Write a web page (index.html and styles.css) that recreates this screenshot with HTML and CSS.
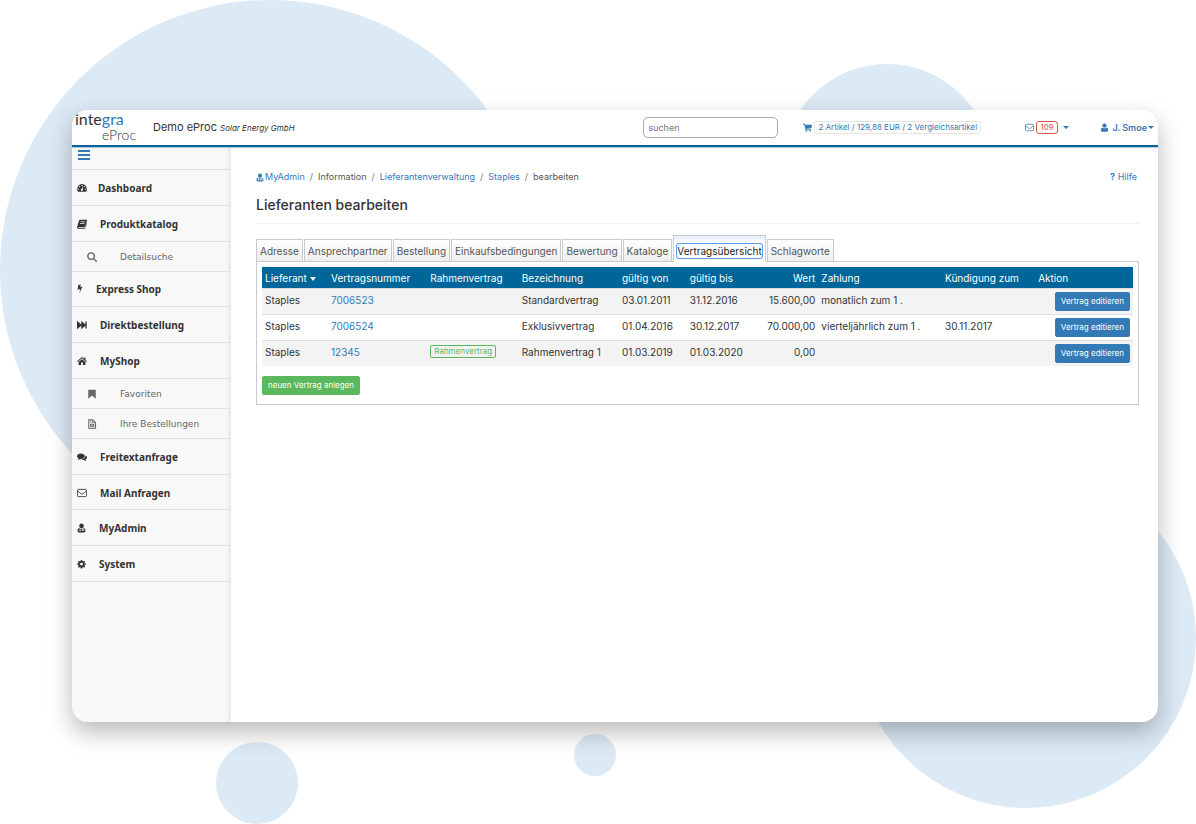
FILE: index.html
```html
<!DOCTYPE html>
<html lang="de">
<head>
<meta charset="utf-8">
<meta name="viewport" content="width=device-width, initial-scale=1">
<title>Lieferanten bearbeiten</title>
<link rel="stylesheet" href="styles.css">
</head>
<body>
<svg class="defs" aria-hidden="true">
  <symbol id="i-user" viewBox="0 0 16 16"><circle cx="8" cy="4.5" r="3.8"/><path d="M4.3 7.8C2 8.300 1.500 10.500 1.500 13c0 1.500.8 2.500 2.200 2.500h8.600c1.400 0 2.200-1 2.200-2.500 0-2.500-.5-4.700-2.800-5.200C9.600 10 6.400 10 4.300 7.800z"/></symbol>
  <symbol id="i-md" viewBox="0 0 16 16"><circle cx="8" cy="4.300" r="4.100"/><path d="M4.500 8C2 8.500 1 10.500 1 13.200 1 14.800 2 15.800 3.500 15.800h9c1.500 0 2.500-1 2.500-2.600C15 10.500 14 8.500 11.500 8v2.200c1 .3 1.500 1 1.500 1.900v1.400h-1.500V12c0-.8-1.500-.8-1.500 0v1.500H8.500V12c0-.9.5-1.600 1.500-1.800V8.800c-1.200.8-2.800.8-4 0v2.400c1.300.7.9 2.700-.5 2.700s-1.800-2-.5-2.700z" fill-rule="evenodd"/></symbol>
  <symbol id="i-cart" viewBox="0 0 16 16"><path d="M0 1.500h3.200l.5 1.700H16l-1 6-9.500 1.100.3 1H14.500v1.500H4.500L2.500 3H0z"/><circle cx="5.700" cy="14.200" r="1.400"/><circle cx="13" cy="14.200" r="1.400"/></symbol>
  <symbol id="i-mail" viewBox="0 0 18 16"><g fill="none" stroke="currentColor" stroke-width="1.500"><rect x="1" y="1.500" width="16" height="13" rx="1.500"/><path d="M1.500 4.500 7.500 9.600c1 .8 2 .8 3 0l6-5.100"/></g></symbol>
  <symbol id="i-dash" viewBox="0 0 18 16"><path fill-rule="evenodd" d="M9 1a9 9 0 0 0-7.600 13.300c.2.400.5.500.9.500h13.400c.4 0 .7-.1.900-.5A9 9 0 0 0 9 1zM9 2.300a1.200 1.200 0 1 1 0 2.400 1.200 1.200 0 0 1 0-2.400zM4.500 4.200a1.200 1.200 0 1 1 0 2.400 1.200 1.200 0 0 1 0-2.400zM13.500 4.200a1.200 1.200 0 1 1 0 2.400 1.200 1.200 0 0 1 0-2.400zM2.700 8.700a1.200 1.200 0 1 1 0 2.400 1.200 1.200 0 0 1 0-2.400zM15.300 8.700a1.200 1.200 0 1 1 0 2.400 1.200 1.200 0 0 1 0-2.400zM9.700 5.700l1.200.3-.9 3.600a1.900 1.900 0 1 1-1.200-.3z"/></symbol>
  <symbol id="i-book" viewBox="0 0 16 16"><path fill-rule="evenodd" d="M5.500 1H15c1 0 1.200.7 1 1.500l-2.700 9c-.3.900-.8 1.200-1.600 1.200H3c-.8 0-.8 1 0 1.100h9.400c.5 0 .9-.3 1-.8L15.500 6c.5.400.5.900.3 1.500l-2.200 6.800c-.2.700-.8 1.200-1.500 1.200H2.500C.8 15.500-.3 13.800.2 12.300L3.200 2.500C3.500 1.500 4.500 1 5.500 1zM6 4l-.4 1.200h6.800l.4-1.200zM5.200 6.600l-.4 1.200h6.800l.4-1.200z"/></symbol>
  <symbol id="i-search" viewBox="0 0 16 16"><g fill="none" stroke="currentColor" stroke-width="2.200"><circle cx="6.600" cy="6.600" r="5.200"/><path d="m10.600 10.600 4.200 4.200" stroke-linecap="round"/></g></symbol>
  <symbol id="i-bolt" viewBox="2 0 11 16"><path d="M4.500 0h4.800L7.500 4.600l4.500-1L6.500 16l1.300-8L3 9.200z"/></symbol>
  <symbol id="i-ff" viewBox="0 0 16 16"><path d="M0 1.200 6.800 7V1.200L13.300 7V2.500H15.500v11h-2.200V9l-6.500 5.800V9L0 14.800z"/></symbol>
  <symbol id="i-home" viewBox="0 0 16 16"><path d="M8 1.500 11.500 4.500V2.500h2v3.800L16 8.500l-1 1.100-7-6-7 6-1-1.100zM8 5l5.500 4.700v4.800H9.500v-4h-3v4h-4V9.700z"/></symbol>
  <symbol id="i-mark" viewBox="0 0 16 16"><path d="M2 1h12v14.500L8 10.500l-6 5z"/></symbol>
  <symbol id="i-file" viewBox="0 0 16 16"><path fill-rule="evenodd" d="M2 .5h7.500L14.500 5v10.500H2zM3.700 2.200v11.600h9V6.500H8.500V2.200zM10 2.500V5h2.500zM5 4h2v1.500H5zM5 7.500h6.500v4.800H5zM6.500 9v1.500H10V9z"/></symbol>
  <symbol id="i-chat" viewBox="0 0 18 16"><path d="M7 1.500c3.900 0 7 2.200 7 5s-3.100 5-7 5l-1.300-.1c-1.300 1-2.700 1.500-4.200 1.600.7-.7 1.200-1.400 1.400-2.400C1.200 9.700 0 8.200 0 6.500c0-2.800 3.100-5 7-5z"/><path d="M15.200 5.300c1.700.8 2.800 2.100 2.800 3.700s-1 2.900-2.700 3.800c.2 1 .8 1.700 1.400 2.400-1.500-.1-3-.8-4.200-1.700-2.200.3-4.300-.1-5.700-1 5 0 8.800-3 8.400-7.200z"/></symbol>
  <symbol id="i-cog" viewBox="0 0 16 16"><path fill-rule="evenodd" d="M6.800.8h2.400l.4 2 1.300.6 1.700-1.200 1.700 1.700-1.200 1.700.6 1.300 2 .3v2.300l-2 .4-.6 1.300 1.200 1.700-1.700 1.700-1.700-1.200-1.300.6-.4 2H6.800l-.4-2-1.300-.6-1.700 1.200-1.700-1.700 1.200-1.700-.6-1.300-2-.4V7.200l2-.3.600-1.300-1.200-1.700 1.700-1.700 1.700 1.200 1.300-.6zM8 5.600a2.600 2.600 0 1 0 0 5.200 2.600 2.600 0 0 0 0-5.200z"/></symbol>
</svg>

<svg class="bubbles" aria-hidden="true">
  <circle cx="270" cy="270" r="270"/>
  <circle cx="887" cy="169" r="105"/>
  <circle cx="1026" cy="638" r="170"/>
  <circle cx="257" cy="783" r="41"/>
  <circle cx="595" cy="755" r="21"/>
</svg>

<div class="window">
  <header class="topbar">
    <a class="logo" href="#" aria-label="integra eProc"><span class="logo-top">inte<b>gra</b></span><span class="logo-sub">eProc</span></a>
    <div class="tenant">Demo eProc <em>Solar Energy GmbH</em></div>
    <input class="search" type="text" placeholder="suchen" aria-label="suchen">
    <a class="cart" href="#"><svg class="icon"><use href="#i-cart"/></svg><span class="cart-info">2 Artikel / 129,88 EUR / 2 Vergleichsartikel</span></a>
    <button class="mail" type="button" aria-label="Nachrichten"><svg class="icon"><use href="#i-mail"/></svg><span class="count">109</span><i class="caret"></i></button>
    <button class="account" type="button"><svg class="icon"><use href="#i-user"/></svg>J. Smoe<i class="caret"></i></button>
  </header>
  <div class="body">
    <nav class="sidebar">
      <div class="toggle-row"><button class="toggle" type="button" aria-label="Menü"><i></i><i></i><i></i></button></div>
      <ul class="menu">
        <li><a class="narrow" href="#"><svg class="icon"><use href="#i-dash"/></svg>Dashboard</a></li>
        <li><a href="#"><svg class="icon"><use href="#i-book"/></svg>Produktkatalog</a></li>
        <li class="sub"><a href="#"><svg class="icon"><use href="#i-search"/></svg>Detailsuche</a></li>
        <li><a href="#"><svg class="icon slim"><use href="#i-bolt"/></svg>Express Shop</a></li>
        <li><a href="#"><svg class="icon"><use href="#i-ff"/></svg>Direktbestellung</a></li>
        <li><a href="#"><svg class="icon"><use href="#i-home"/></svg>MyShop</a></li>
        <li class="sub"><a href="#"><svg class="icon"><use href="#i-mark"/></svg>Favoriten</a></li>
        <li class="sub"><a href="#"><svg class="icon"><use href="#i-file"/></svg>Ihre Bestellungen</a></li>
        <li><a href="#"><svg class="icon"><use href="#i-chat"/></svg>Freitextanfrage</a></li>
        <li><a href="#"><svg class="icon"><use href="#i-mail"/></svg>Mail Anfragen</a></li>
        <li><a href="#"><svg class="icon small"><use href="#i-md"/></svg>MyAdmin</a></li>
        <li><a href="#"><svg class="icon small"><use href="#i-cog"/></svg>System</a></li>
      </ul>
    </nav>
    <main class="content">
      <div class="crumb-row">
        <ol class="crumbs">
          <li><a href="#"><svg class="icon"><use href="#i-md"/></svg>MyAdmin</a></li>
          <li>Information</li>
          <li><a href="#">Lieferantenverwaltung</a></li>
          <li><a href="#">Staples</a></li>
          <li>bearbeiten</li>
        </ol>
        <a class="help" href="#"><b>?</b> Hilfe</a>
      </div>
      <h1>Lieferanten bearbeiten</h1>
      <div class="tabs" role="tablist">
        <button type="button" role="tab">Adresse</button>
        <button type="button" role="tab">Ansprechpartner</button>
        <button type="button" role="tab">Bestellung</button>
        <button type="button" role="tab">Einkaufsbedingungen</button>
        <button type="button" role="tab">Bewertung</button>
        <button type="button" role="tab">Kataloge</button>
        <button type="button" role="tab" class="active" aria-selected="true"><span>Vertragsübersicht</span></button>
        <button type="button" role="tab">Schlagworte</button>
      </div>
      <section class="panel">
        <table>
          <colgroup><col class="c-sup"><col class="c-nr"><col class="c-frame"><col class="c-name"><col class="c-from"><col class="c-to"><col class="c-value"><col class="c-pay"><col class="c-end"><col></colgroup>
          <thead>
            <tr><th>Lieferant<i class="caret sort"></i></th><th>Vertragsnummer</th><th>Rahmenvertrag</th><th>Bezeichnung</th><th>gültig von</th><th>gültig bis</th><th class="num">Wert</th><th>Zahlung</th><th>Kündigung zum</th><th>Aktion</th></tr>
          </thead>
          <tbody>
            <tr><td>Staples</td><td><a href="#">7006523</a></td><td></td><td>Standardvertrag</td><td>03.01.2011</td><td>31.12.2016</td><td class="num">15.600,00</td><td>monatlich zum 1 .</td><td></td><td class="act"><button class="btn" type="button">Vertrag editieren</button></td></tr>
            <tr><td>Staples</td><td><a href="#">7006524</a></td><td></td><td>Exklusivvertrag</td><td>01.04.2016</td><td>30.12.2017</td><td class="num">70.000,00</td><td>vierteljährlich zum 1 .</td><td>30.11.2017</td><td class="act"><button class="btn" type="button">Vertrag editieren</button></td></tr>
            <tr><td>Staples</td><td><a href="#">12345</a></td><td><span class="tag">Rahmenvertrag</span></td><td>Rahmenvertrag 1</td><td>01.03.2019</td><td>01.03.2020</td><td class="num">0,00</td><td></td><td></td><td class="act"><button class="btn" type="button">Vertrag editieren</button></td></tr>
          </tbody>
        </table>
        <button class="btn add" type="button">neuen Vertrag anlegen</button>
      </section>
    </main>
  </div>
</div>
</body>
</html>
```
FILE: styles.css
```css
* { box-sizing: border-box; }
body {
  margin: 0;
  min-height: 100vh;
  position: relative;
  display: flex;
  padding: 110px 38px 102px 72px;
  background: #fff;
  color: #333;
  font: 10px/14px Inter, "Liberation Sans", sans-serif;
}
a { color: #337ab7; text-decoration: none; }
button, input { font: inherit; color: inherit; }
button { margin: 0; padding: 0; border: 0; background: none; cursor: pointer; white-space: nowrap; }
.defs { position: absolute; width: 0; height: 0; }
.bubbles { position: absolute; inset: 0; width: 100%; height: 100%; fill: #dceaf6; }
.icon { width: 9px; height: 9px; fill: currentColor; flex: none; }
.caret {
  display: inline-block;
  border: 3px solid transparent;
  border-top-color: currentColor;
  border-bottom: 0;
  vertical-align: middle;
}

.window {
  position: relative;
  flex: 1;
  display: flex;
  flex-direction: column;
  overflow: hidden;
  border-radius: 16px;
  background: #fff;
  box-shadow: 0 10px 24px rgba(0, 0, 0, .28);
}

.topbar {
  position: relative;
  display: flex;
  align-items: center;
  height: 37px;
  border-bottom: 2px solid #0a6496;
  box-shadow: 0 1px 1px #b5cfe0;
  color: #337ab7;
}
.logo { display: flex; flex-direction: column; width: 66px; margin: 0 12px 2px 3px; font-family: Lato, sans-serif; color: #333; }
.logo-top { font-size: 16px; line-height: 16px; }
.logo-top b { font-weight: 400; color: #337ab7; }
.logo-sub { padding-left: 27px; font-size: 14px; line-height: 16px; font-weight: 300; color: #333; }
.tenant { flex: 1; font-size: 11px; color: #333; white-space: nowrap; }
.tenant em { font-size: 8px; }
.search {
  width: 135px;
  height: 21px;
  margin-right: 25px;
  padding: 0 4px;
  border: 1px solid #aaa;
  border-radius: 5px;
  font-size: 9px;
  outline: 0;
}
.search::placeholder { color: #777; opacity: 1; }
.cart { display: flex; align-items: center; gap: 2px; width: 179px; margin-right: 43px; font-size: 8px; white-space: nowrap; }
.cart-info { padding: 0 3px; line-height: 11px; border: 1px solid #e6e6e6; border-radius: 2px; }
.mail { display: flex; align-items: center; width: 43px; margin-right: 32px; }
.count { margin: 0 5px 0 2px; padding: 0 3px; border: 1px solid #d9534f; border-radius: 3px; color: #d9534f; font-size: 8px; line-height: 11px; }
.account { display: flex; align-items: center; margin-right: 4px; font-size: 9px; font-weight: 600; }
.account .icon { margin-right: 3px; }
.account .caret { margin-left: 1px; }

.body { flex: 1; display: flex; }
.sidebar {
  width: 159px;
  flex: none;
  background: #f8f8f8;
  box-shadow: inset -5px 0 5px -3px #e4e4e4;
  font-family: "Noto Sans", "Open Sans", sans-serif;
}
.toggle-row { height: 23px; padding: 3px 6px; border-bottom: 1px solid #ddd; }
.toggle { display: flex; flex-direction: column; gap: 2px; width: 12px; }
.toggle i { height: 2px; background: #337ab7; }
.menu { display: flex; flex-direction: column; min-height: 412px; margin: 0; padding: 0; list-style: none; }
.menu li { flex: 36 0 0; display: flex; border-bottom: 1px solid #e0e0e0; }
.menu a { flex: 1; display: flex; align-items: center; gap: 13px; padding: 1px 0 0 5px; color: #333; font-weight: 700; }
.menu .icon { width: 10px; height: 10px; }
.menu .narrow { gap: 11px; }
.menu .slim { width: 6px; }
.menu .small { width: 9px; }
.menu .sub { flex-grow: 30; }
.menu .sub a { gap: 23px; padding-left: 15px; color: #666; font-family: "DejaVu Sans", sans-serif; font-size: 9px; font-weight: 400; }

.content { flex: 1; min-width: 0; padding: 23px 19px 20px 25px; }
.crumb-row { display: flex; justify-content: space-between; padding-right: 2px; font-size: 9px; color: #555; }
.crumbs { display: flex; margin: 0; padding: 0; list-style: none; }
.crumbs a { display: inline-flex; align-items: center; gap: 1px; }
.crumbs .icon { width: 8px; }
.crumbs li + li::before { content: "/"; padding: 0 5px; color: #777; }
h1 { margin: 9px 0 11px; padding-bottom: 8px; border-bottom: 1px solid #eee; font-size: 14px; line-height: 20px; font-weight: 500; color: #333; }

.tabs { display: flex; align-items: flex-end; gap: 1px; }
.tabs button {
  height: 22px;
  padding: 1px 3px 0;
  border: 1px solid #c8ccd2;
  border-bottom: 0;
  background: linear-gradient(#fff, #eee);
  color: #555;
}
.tabs .active { position: relative; height: 27px; margin-bottom: -1px; padding: 4px 3px 0; background: linear-gradient(#e6effa 3px, #fff 4px); color: #222; }
.active span { display: block; border-radius: 2px; box-shadow: 0 0 0 1px #5b9cf5; line-height: 14px; }

.panel { padding: 5px 5px 9px; border: 1px solid #c8ccd2; }
table { width: 100%; table-layout: fixed; border-collapse: collapse; }
th, td { padding: 4px 3px; text-align: left; vertical-align: top; font-weight: 400; white-space: nowrap; }
th { padding-bottom: 3px; }
thead { background: #069; color: #fff; }
tbody tr { height: 26px; border-top: 1px solid #ddd; }
tbody tr:nth-child(odd) { background: #f3f3f3; }
.num { text-align: right; }
.act { padding: 3px; text-align: right; }
.sort { margin-left: 3px; border-width: 4px 3px 0; }
.c-sup { width: 66px; }
.c-nr { width: 11.4%; }
.c-frame { width: 10.5%; }
.c-name { width: 11.5%; }
.c-from { width: 7.8%; }
.c-to { width: 7%; }
.c-value { width: 8.1%; }
.c-pay { width: 14.2%; }
.c-end { width: 10.7%; }
.btn { height: 19px; padding: 0 5px; border: 1px solid #337ab7; border-radius: 2px; background: #337ab7; color: #fff; font-size: 8px; line-height: 17px; vertical-align: top; }
.add { margin-top: 10px; border-color: #5cb85c; background: #5cb85c; }
.tag { display: inline-block; padding: 0 3px; border: 1px solid #5cb85c; border-radius: 2px; color: #5cb85c; font-size: 8px; line-height: 11px; vertical-align: top; }
```
